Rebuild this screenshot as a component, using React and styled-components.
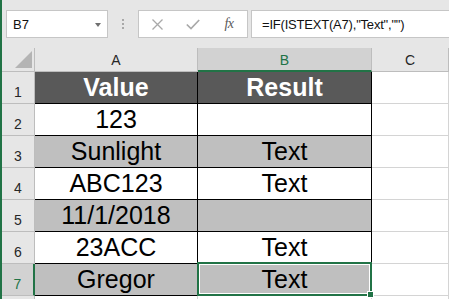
import React from 'react';
import styled, { createGlobalStyle } from 'styled-components';

const GREEN = '#217346';
const HEAD_BG = '#e6e6e6';
const HEAD_ACTIVE = '#d2d2d2';
const HEAD_LINE = '#bdbdbd';
const GRID = '#d4d4d4';

const Global = createGlobalStyle`
  html, body { margin: 0; padding: 0; background: ${HEAD_BG}; }
  body { font-family: "Liberation Sans", Arial, sans-serif; }
  * { box-sizing: border-box; }
`;

const Window = styled.div`
  width: 449px;
  height: 299px;
  overflow: hidden;
  border-left: 2px solid ${GREEN};
  background: ${HEAD_BG};
  display: flex;
  flex-direction: column;
`;

const FormulaBar = styled.div`
  flex: none;
  height: 48px;
  display: flex;
  align-items: center;
  padding-left: 4px;
`;

const NameBox = styled.div`
  width: 102px;
  height: 28px;
  background: #fff;
  border: 1px solid #c6c6c6;
  display: flex;
  align-items: center;
  justify-content: space-between;
  padding: 0 6px 0 6px;
  font-size: 13px;
  color: #111;
`;

const DropArrow = styled.span`
  width: 0;
  height: 0;
  border-left: 3.5px solid transparent;
  border-right: 3.5px solid transparent;
  border-top: 4px solid #6f6f6f;
  margin-top: 1px;
`;

const Splitter = styled.div`
  width: 30px;
  display: flex;
  flex-direction: column;
  align-items: center;
  gap: 2px;
`;

const Dot = styled.span`
  width: 2px;
  height: 2px;
  background: #a8a8a8;
`;

const ButtonsBox = styled.div`
  width: 110px;
  height: 28px;
  background: #fff;
  border: 1px solid #c6c6c6;
  display: flex;
  align-items: center;
`;

const BarButton = styled.span`
  width: 36px;
  height: 100%;
  display: flex;
  align-items: center;
  justify-content: center;
`;

const Fx = styled.span`
  font-family: "Liberation Serif", "Times New Roman", serif;
  font-style: italic;
  font-size: 14px;
  color: #5a5a5a;
  letter-spacing: -0.5px;
`;

const FormulaInput = styled.div`
  flex: 1;
  margin-left: 3px;
  margin-right: -2px;
  height: 28px;
  background: #fff;
  border: 1px solid #c6c6c6;
  display: flex;
  align-items: center;
  padding-left: 10px;
  font-size: 13px;
  letter-spacing: -0.2px;
  color: #111;
  white-space: nowrap;
`;

const Sheet = styled.div`
  flex: 1;
  display: grid;
  grid-template-columns: 33px 163px 174px 1fr;
  grid-template-rows: 24px repeat(8, 32px);
  overflow: hidden;
`;

const Corner = styled.div`
  background: ${HEAD_BG};
  border-right: 1px solid ${HEAD_LINE};
  border-bottom: 1px solid ${HEAD_LINE};
  display: flex;
  align-items: flex-end;
  justify-content: flex-end;
  padding: 0 2px 3px 0;
`;

const ColHeader = styled.div`
  background: ${(p) => (p.$active ? HEAD_ACTIVE : HEAD_BG)};
  border-right: 1px solid ${HEAD_LINE};
  border-bottom: ${(p) => (p.$active ? `2px solid ${GREEN}` : `1px solid ${HEAD_LINE}`)};
  color: ${(p) => (p.$active ? GREEN : '#262626')};
  font-size: 14px;
  display: flex;
  align-items: flex-end;
  justify-content: center;
  padding-bottom: ${(p) => (p.$active ? 2 : 3)}px;
  line-height: 16px;
`;

const RowHeader = styled.div`
  background: ${(p) => (p.$active ? HEAD_ACTIVE : HEAD_BG)};
  border-right: ${(p) => (p.$active ? `2px solid ${GREEN}` : `1px solid ${HEAD_LINE}`)};
  border-bottom: 1px solid ${HEAD_LINE};
  color: ${(p) => (p.$active ? GREEN : '#262626')};
  font-size: 14px;
  line-height: 16px;
  display: flex;
  align-items: flex-end;
  justify-content: center;
  padding-bottom: 3px;
`;

const FILLS = { dark: '#595959', gray: '#bfbfbf', white: '#ffffff' };

const Cell = styled.div`
  position: relative;
  background: ${(p) => FILLS[p.$fill || 'white']};
  border-right: 1px solid ${(p) => (p.$table ? '#000' : GRID)};
  border-bottom: 1px solid ${(p) => (p.$table ? '#000' : GRID)};
  color: ${(p) => (p.$fill === 'dark' ? '#fff' : '#000')};
  font-weight: ${(p) => (p.$fill === 'dark' ? 700 : 400)};
  font-size: 25px;
  line-height: 31px;
  text-align: center;
  white-space: nowrap;
  z-index: ${(p) => (p.$selected ? 2 : 0)};

  ${(p) =>
    p.$selected &&
    `
    &::after {
      content: '';
      position: absolute;
      top: -2px;
      left: -1px;
      right: -1px;
      bottom: -1px;
      border: 2px solid ${GREEN};
      box-shadow: inset 0 0 0 1px #fff;
      pointer-events: none;
    }
  `}
`;

const FillHandle = styled.span`
  position: absolute;
  right: -3px;
  bottom: -3px;
  width: 7px;
  height: 7px;
  background: ${GREEN};
  border: 1px solid #fff;
  z-index: 3;
`;

const rows = [
  { a: 'Value', b: 'Result', fill: 'dark' },
  { a: '123', b: '', fill: 'white' },
  { a: 'Sunlight', b: 'Text', fill: 'gray' },
  { a: 'ABC123', b: 'Text', fill: 'white' },
  { a: '11/1/2018', b: '', fill: 'gray' },
  { a: '23ACC', b: 'Text', fill: 'white' },
  { a: 'Gregor', b: 'Text', fill: 'gray' },
];

export default function App() {
  return (
    <>
      <Global />
      <Window>
        <FormulaBar>
          <NameBox>
            <span>B7</span>
            <DropArrow />
          </NameBox>
          <Splitter>
            <Dot />
            <Dot />
            <Dot />
          </Splitter>
          <ButtonsBox>
            <BarButton>
              <svg width="11" height="11" viewBox="0 0 11 11">
                <path d="M0.5 0.5 L10.5 10.5 M10.5 0.5 L0.5 10.5" stroke="#a9a9a9" strokeWidth="1.3" fill="none" />
              </svg>
            </BarButton>
            <BarButton>
              <svg width="14" height="11" viewBox="0 0 14 11">
                <path d="M0.8 5.5 L5 9.6 L13.2 1" stroke="#a9a9a9" strokeWidth="1.7" fill="none" />
              </svg>
            </BarButton>
            <BarButton>
              <Fx>fx</Fx>
            </BarButton>
          </ButtonsBox>
          <FormulaInput>=IF(ISTEXT(A7),"Text","")</FormulaInput>
        </FormulaBar>
        <Sheet>
          <Corner>
            <svg width="17" height="17" viewBox="0 0 17 17">
              <path d="M17 0 L17 17 L0 17 Z" fill="#b4b4b4" />
            </svg>
          </Corner>
          <ColHeader>A</ColHeader>
          <ColHeader $active>B</ColHeader>
          <ColHeader>C</ColHeader>
          {rows.map((r, i) => {
            const last = i === rows.length - 1;
            return (
              <React.Fragment key={i}>
                <RowHeader $active={last}>{i + 1}</RowHeader>
                <Cell $table $fill={r.fill}>{r.a}</Cell>
                <Cell $table $fill={r.fill} $selected={last}>
                  {r.b}
                  {last && <FillHandle />}
                </Cell>
                <Cell />
              </React.Fragment>
            );
          })}
          <RowHeader aria-label="row 8" />
          <Cell />
          <Cell />
          <Cell />
        </Sheet>
      </Window>
    </>
  );
}
